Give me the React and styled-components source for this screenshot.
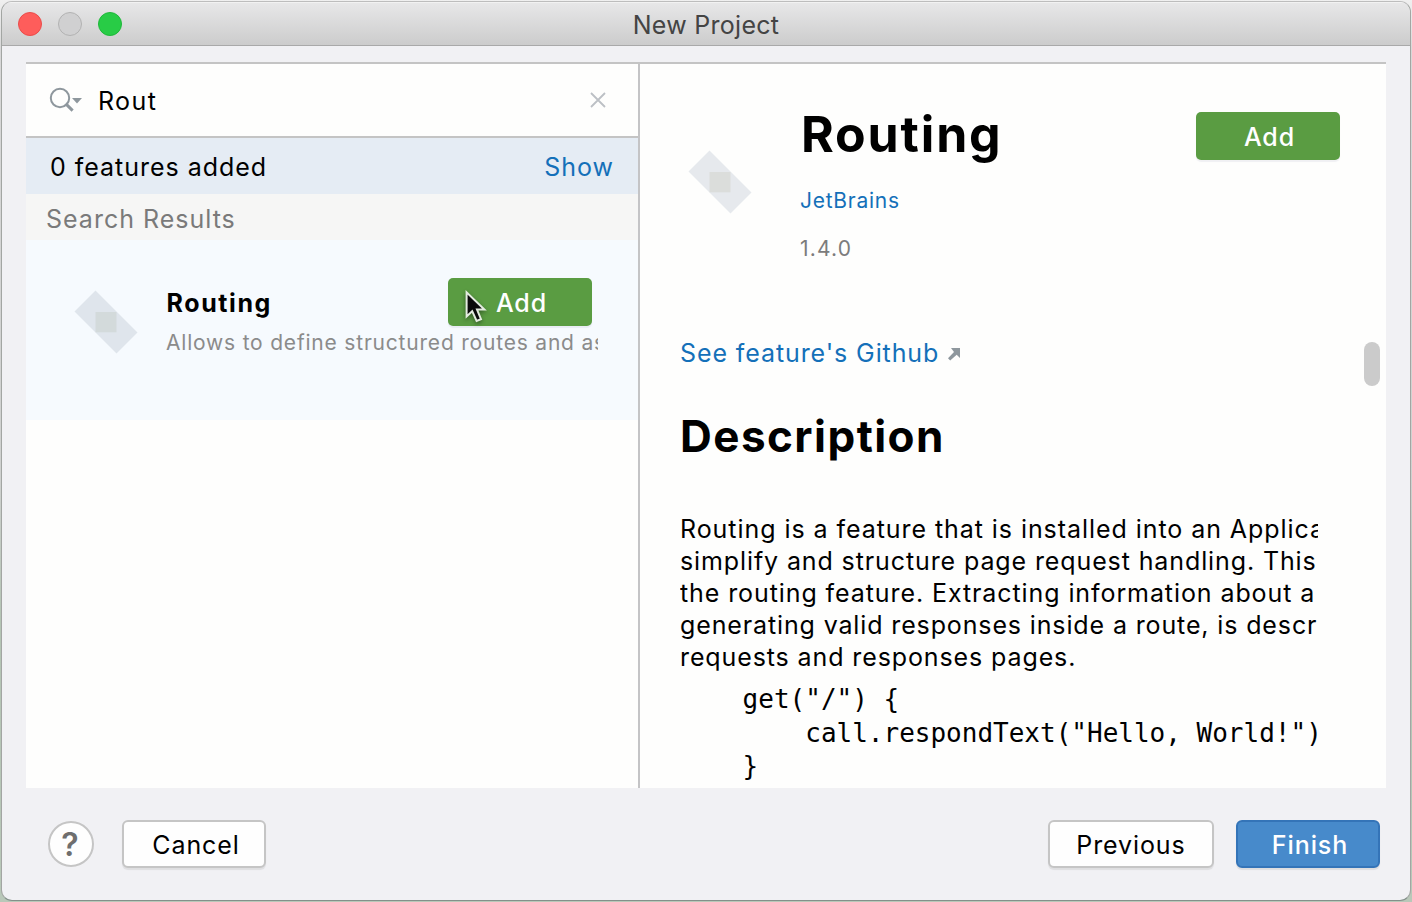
import React from 'react';
import styled, { createGlobalStyle } from 'styled-components';

const sans = '"Inter", "Liberation Sans", sans-serif';

const GlobalStyle = createGlobalStyle`
  * { box-sizing: border-box; }
  html, body { margin: 0; padding: 0; overflow: hidden; }
  h1, h2, p, pre { margin: 0; font-weight: inherit; }
  button { font: inherit; letter-spacing: inherit; }
`;

const Desktop = styled.div`
  width: 1412px;
  height: 902px;
  padding: 1px 1px 1px 1px;
  background: linear-gradient(#f0f0f0 0, #d8d8d8 50px, #cfd1cf 480px, #b4c4b4 620px, #b9c8b9 902px);
  font-family: ${sans};
  font-size: 25px;
  letter-spacing: 0.9px;
  color: #000;
`;

const Window = styled.div`
  display: flex;
  flex-direction: column;
  width: 1410px;
  height: 900px;
  border: 1px solid #a3a6a3;
  border-top-color: #bdbdbd;
  border-bottom-color: #84908a;
  border-radius: 11px;
  background: #f1f1f4;
  overflow: hidden;
`;

const TitleBar = styled.header`
  display: grid;
  grid-template-columns: 1fr auto 1fr;
  align-items: center;
  flex: none;
  height: 44px;
  padding: 0 16px;
  border-top: 1px solid #f2f2f2;
  border-bottom: 1px solid #a9a9a9;
  background: linear-gradient(#e7e7e8, #cccccc);
`;

const Lights = styled.div`
  display: flex;
  gap: 16px;
`;

const Light = styled.span`
  width: 24px;
  height: 24px;
  border-radius: 50%;
  border: 1px solid ${(p) => p.$edge};
  background: ${(p) => p.$fill};
`;

const Title = styled.h1`
  font-size: 25px;
  line-height: 30px;
  letter-spacing: 0.28px;
  color: #444;
  padding-top: 2px;
`;

const Content = styled.main`
  display: grid;
  grid-template-columns: 614px 1fr;
  flex: none;
  width: 1360px;
  height: 726px;
  margin: 16px 0 0 24px;
  border-top: 2px solid #c4c4c4;
  background: #fefefd;
`;

const ListPane = styled.section`
  border-right: 2px solid #c4c4c6;
  min-width: 0;
`;

const SearchRow = styled.div`
  display: flex;
  align-items: center;
  height: 74px;
  padding: 0 31px 0 23px;
  border-bottom: 2px solid #c4c4c4;
`;

const Query = styled.span`
  flex: 1;
  margin-left: 15px;
  padding-top: 2px;
  letter-spacing: 1.4px;
`;

const Summary = styled.div`
  display: flex;
  justify-content: space-between;
  align-items: center;
  height: 56px;
  padding: 2px 24px 0;
  background: #e5ecf4;
  letter-spacing: 0.98px;
`;

const Link = styled.a`
  color: #1470b9;
  white-space: nowrap;
`;

const GroupHeader = styled.div`
  display: flex;
  align-items: center;
  height: 46px;
  padding: 4px 20px 0;
  background: #f6f6f5;
  color: #7a7a7a;
  letter-spacing: 1px;
`;

const ResultRow = styled.article`
  position: relative;
  display: flex;
  height: 180px;
  padding: 38px 40px 0 48px;
  background: #f6fafe;
`;

const ListLogo = styled.div`
  flex: none;
  width: 64px;
  height: 64px;
  margin: 12px 28px 0 0;
  svg { display: block; }
`;

const ResultBody = styled.div`
  flex: 1;
  min-width: 0;
`;

const ResultHead = styled.div`
  display: flex;
  justify-content: space-between;
  align-items: center;
  height: 48px;
  padding-right: 6px;
`;

const ResultName = styled.span`
  font-weight: 700;
  padding: 2px 0 0 0.5px;
  letter-spacing: 1.6px;
`;

const ResultText = styled.p`
  height: 34px;
  line-height: 34px;
  font-size: 21px;
  letter-spacing: 0.8px;
  color: #8b8b8b;
  white-space: nowrap;
  overflow: hidden;
`;

const AddButton = styled.button`
  flex: none;
  width: 144px;
  height: 48px;
  padding: 2px 0 0 3px;
  border: 0;
  border-radius: 5px;
  background: #5a9c42;
  box-shadow: 0 2px 1px rgba(120, 120, 160, 0.1);
  color: #fff;
  font-weight: 500;
`;

const Pointer = styled.div`
  position: absolute;
  left: 438px;
  top: 49px;
  svg { display: block; overflow: visible; filter: drop-shadow(0 2px 2px rgba(0, 0, 0, 0.4)); }
`;

const DetailPane = styled.section`
  position: relative;
  min-width: 0;
  padding: 0 46px 0 40px;
  overflow: hidden;
`;

const DetailHead = styled.div`
  display: flex;
  align-items: flex-start;
  height: 256px;
`;

const DetailLogo = styled.div`
  flex: none;
  width: 64px;
  height: 64px;
  margin: 86px 48px 0 8px;
  svg { display: block; }
`;

const DetailInfo = styled.div`
  display: flex;
  flex-direction: column;
  align-items: flex-start;
  flex: 1;
  padding-top: 40px;
  font-size: 21px;
  line-height: 48px;
  letter-spacing: 0.75px;
`;

const FeatureName = styled.h2`
  height: 73px;
  padding-left: 1px;
  font-size: 50px;
  line-height: 60px;
  font-weight: 700;
  letter-spacing: 1.85px;
`;

const Version = styled.span`
  color: #7c7c7c;
  letter-spacing: 1.2px;
`;

const HeadAction = styled.div`
  padding-top: 48px;
`;

const RepoLine = styled.div`
  display: flex;
  align-items: center;
  height: 66px;
  gap: 8px;
  svg { margin-top: 2px; }
`;

const SectionTitle = styled.h2`
  height: 102px;
  line-height: 100px;
  font-size: 44px;
  font-weight: 700;
  letter-spacing: 1.46px;
`;

const Clip = styled.div`
  width: 638px;
  margin-top: 25px;
  overflow: hidden;
  white-space: nowrap;
`;

const Paragraph = styled.p`
  line-height: 32px;
  letter-spacing: ${(p) => p.$tracking}px;
`;

const Code = styled.pre`
  margin-top: 10px;
  font-family: "DejaVu Sans Mono", monospace;
  font-size: 26px;
  line-height: 33.5px;
  letter-spacing: 0;
`;

const ScrollThumb = styled.div`
  position: absolute;
  right: 6px;
  top: 278px;
  width: 16px;
  height: 44px;
  border-radius: 8px;
  background: #cbcbcb;
`;

const Footer = styled.footer`
  display: flex;
  align-items: center;
  height: 112px;
  padding: 0 30px 0 46px;
`;

const HelpButton = styled.button`
  width: 46px;
  height: 46px;
  margin-right: 28px;
  padding: 1px 2px 0 0;
  border: 2px solid #c5c5c5;
  border-radius: 50%;
  background: #fefefe;
  color: #6e6e6e;
  font-size: 32px;
  line-height: 38px;
  font-weight: 600;
  letter-spacing: 0;
`;

const FooterButton = styled.button`
  width: ${(p) => p.$width}px;
  height: 48px;
  padding: 1px 0 0 ${(p) => p.$shift}px;
  border: 2px solid ${(p) => (p.$primary ? '#3474b8' : '#c5c5c5')};
  border-radius: 6px;
  background: ${(p) => (p.$primary ? '#478acb' : '#fefefe')};
  box-shadow: 0 2px 1px rgba(0, 0, 0, 0.08);
  color: ${(p) => (p.$primary ? '#fff' : '#000')};
  font-weight: ${(p) => (p.$primary ? 500 : 400)};
`;

const Spacer = styled.div`
  flex: 1;
`;

const ButtonPair = styled.div`
  display: flex;
  gap: 22px;
`;

function FeatureLogo({ band, core }) {
  return (
    <svg width="64" height="64" viewBox="0 0 64 64">
      <path d="M21.5 0.5 L63.5 42.5 L42.5 63.5 L0.5 21.5 Z" fill={band} />
      <rect x="21.5" y="22" width="21" height="20.3" fill={core} />
    </svg>
  );
}

function SearchIcon() {
  return (
    <svg width="34" height="26" viewBox="0 0 34 26" fill="none">
      <circle cx="11" cy="11" r="9.2" stroke="#8e979d" strokeWidth="2" />
      <path d="M16.6 16.6 L23.6 23.6" stroke="#8e979d" strokeWidth="3" />
      <path d="M23 11 H33 L28 16.5 Z" fill="#8e979d" />
    </svg>
  );
}

function ClearIcon() {
  return (
    <svg width="18" height="18" viewBox="0 0 18 18">
      <path d="M2 2 L16 16 M16 2 L2 16" stroke="#bcc0c5" strokeWidth="1.8" />
    </svg>
  );
}

function ExternalIcon() {
  return (
    <svg width="14" height="14" viewBox="0 0 14 14" fill="#8e979d">
      <path d="M4 1 H13 V11 L9.7 7.7 L3.2 13.4 L1 11.2 L7 5 Z" />
    </svg>
  );
}

function PointerIcon() {
  return (
    <svg width="24" height="36" viewBox="0 0 24 36">
      <path
        d="M2.6 3.4 V27.4 L8.2 22.2 L12.6 32 L17 30.2 L13 20.6 H20.4 Z"
        fill="#0a0a0a"
        stroke="#e4ece0"
        strokeWidth="2"
        strokeLinejoin="miter"
      />
    </svg>
  );
}

const paragraph = [
  { text: 'Routing is a feature that is installed into an Application', tracking: 0.94 },
  { text: 'simplify and structure page request handling. This', tracking: 0.89 },
  { text: 'the routing feature. Extracting information about a', tracking: 0.91 },
  { text: 'generating valid responses inside a route, is descri', tracking: 0.87 },
  { text: 'requests and responses pages.', tracking: 0.89 },
];

const code = '    get("/") {\n        call.respondText("Hello, World!")\n    }';

export default function App() {
  return (
    <Desktop>
      <GlobalStyle />
      <Window>
        <TitleBar>
          <Lights>
            <Light $fill="#fe5d5b" $edge="#ea4c4a" />
            <Light $fill="#d0d0d1" $edge="#b2b2b2" />
            <Light $fill="#28cc46" $edge="#1fb83a" />
          </Lights>
          <Title>New Project</Title>
        </TitleBar>
        <Content>
          <ListPane>
            <SearchRow>
              <SearchIcon />
              <Query>Rout</Query>
              <ClearIcon />
            </SearchRow>
            <Summary>
              <span>0 features added</span>
              <Link>Show</Link>
            </Summary>
            <GroupHeader>Search Results</GroupHeader>
            <ResultRow>
              <ListLogo>
                <FeatureLogo band="#dfe5ec" core="#d3dadb" />
              </ListLogo>
              <ResultBody>
                <ResultHead>
                  <ResultName>Routing</ResultName>
                  <AddButton>Add</AddButton>
                </ResultHead>
                <ResultText>Allows to define structured routes and ass</ResultText>
              </ResultBody>
              <Pointer>
                <PointerIcon />
              </Pointer>
            </ResultRow>
          </ListPane>
          <DetailPane>
            <DetailHead>
              <DetailLogo>
                <FeatureLogo band="#e6e9ed" core="#dbdddb" />
              </DetailLogo>
              <DetailInfo>
                <FeatureName>Routing</FeatureName>
                <Link>JetBrains</Link>
                <Version>1.4.0</Version>
              </DetailInfo>
              <HeadAction>
                <AddButton>Add</AddButton>
              </HeadAction>
            </DetailHead>
            <RepoLine>
              <Link>See feature's Github</Link>
              <ExternalIcon />
            </RepoLine>
            <SectionTitle>Description</SectionTitle>
            <Clip>
              {paragraph.map((line) => (
                <Paragraph key={line.text} $tracking={line.tracking}>
                  {line.text}
                </Paragraph>
              ))}
              <Code>{code}</Code>
            </Clip>
            <ScrollThumb />
          </DetailPane>
        </Content>
        <Footer>
          <HelpButton>?</HelpButton>
          <FooterButton $width={144} $shift={4}>
            Cancel
          </FooterButton>
          <Spacer />
          <ButtonPair>
            <FooterButton $width={166} $shift={0}>
              Previous
            </FooterButton>
            <FooterButton $width={144} $shift={4} $primary>
              Finish
            </FooterButton>
          </ButtonPair>
        </Footer>
      </Window>
    </Desktop>
  );
}
